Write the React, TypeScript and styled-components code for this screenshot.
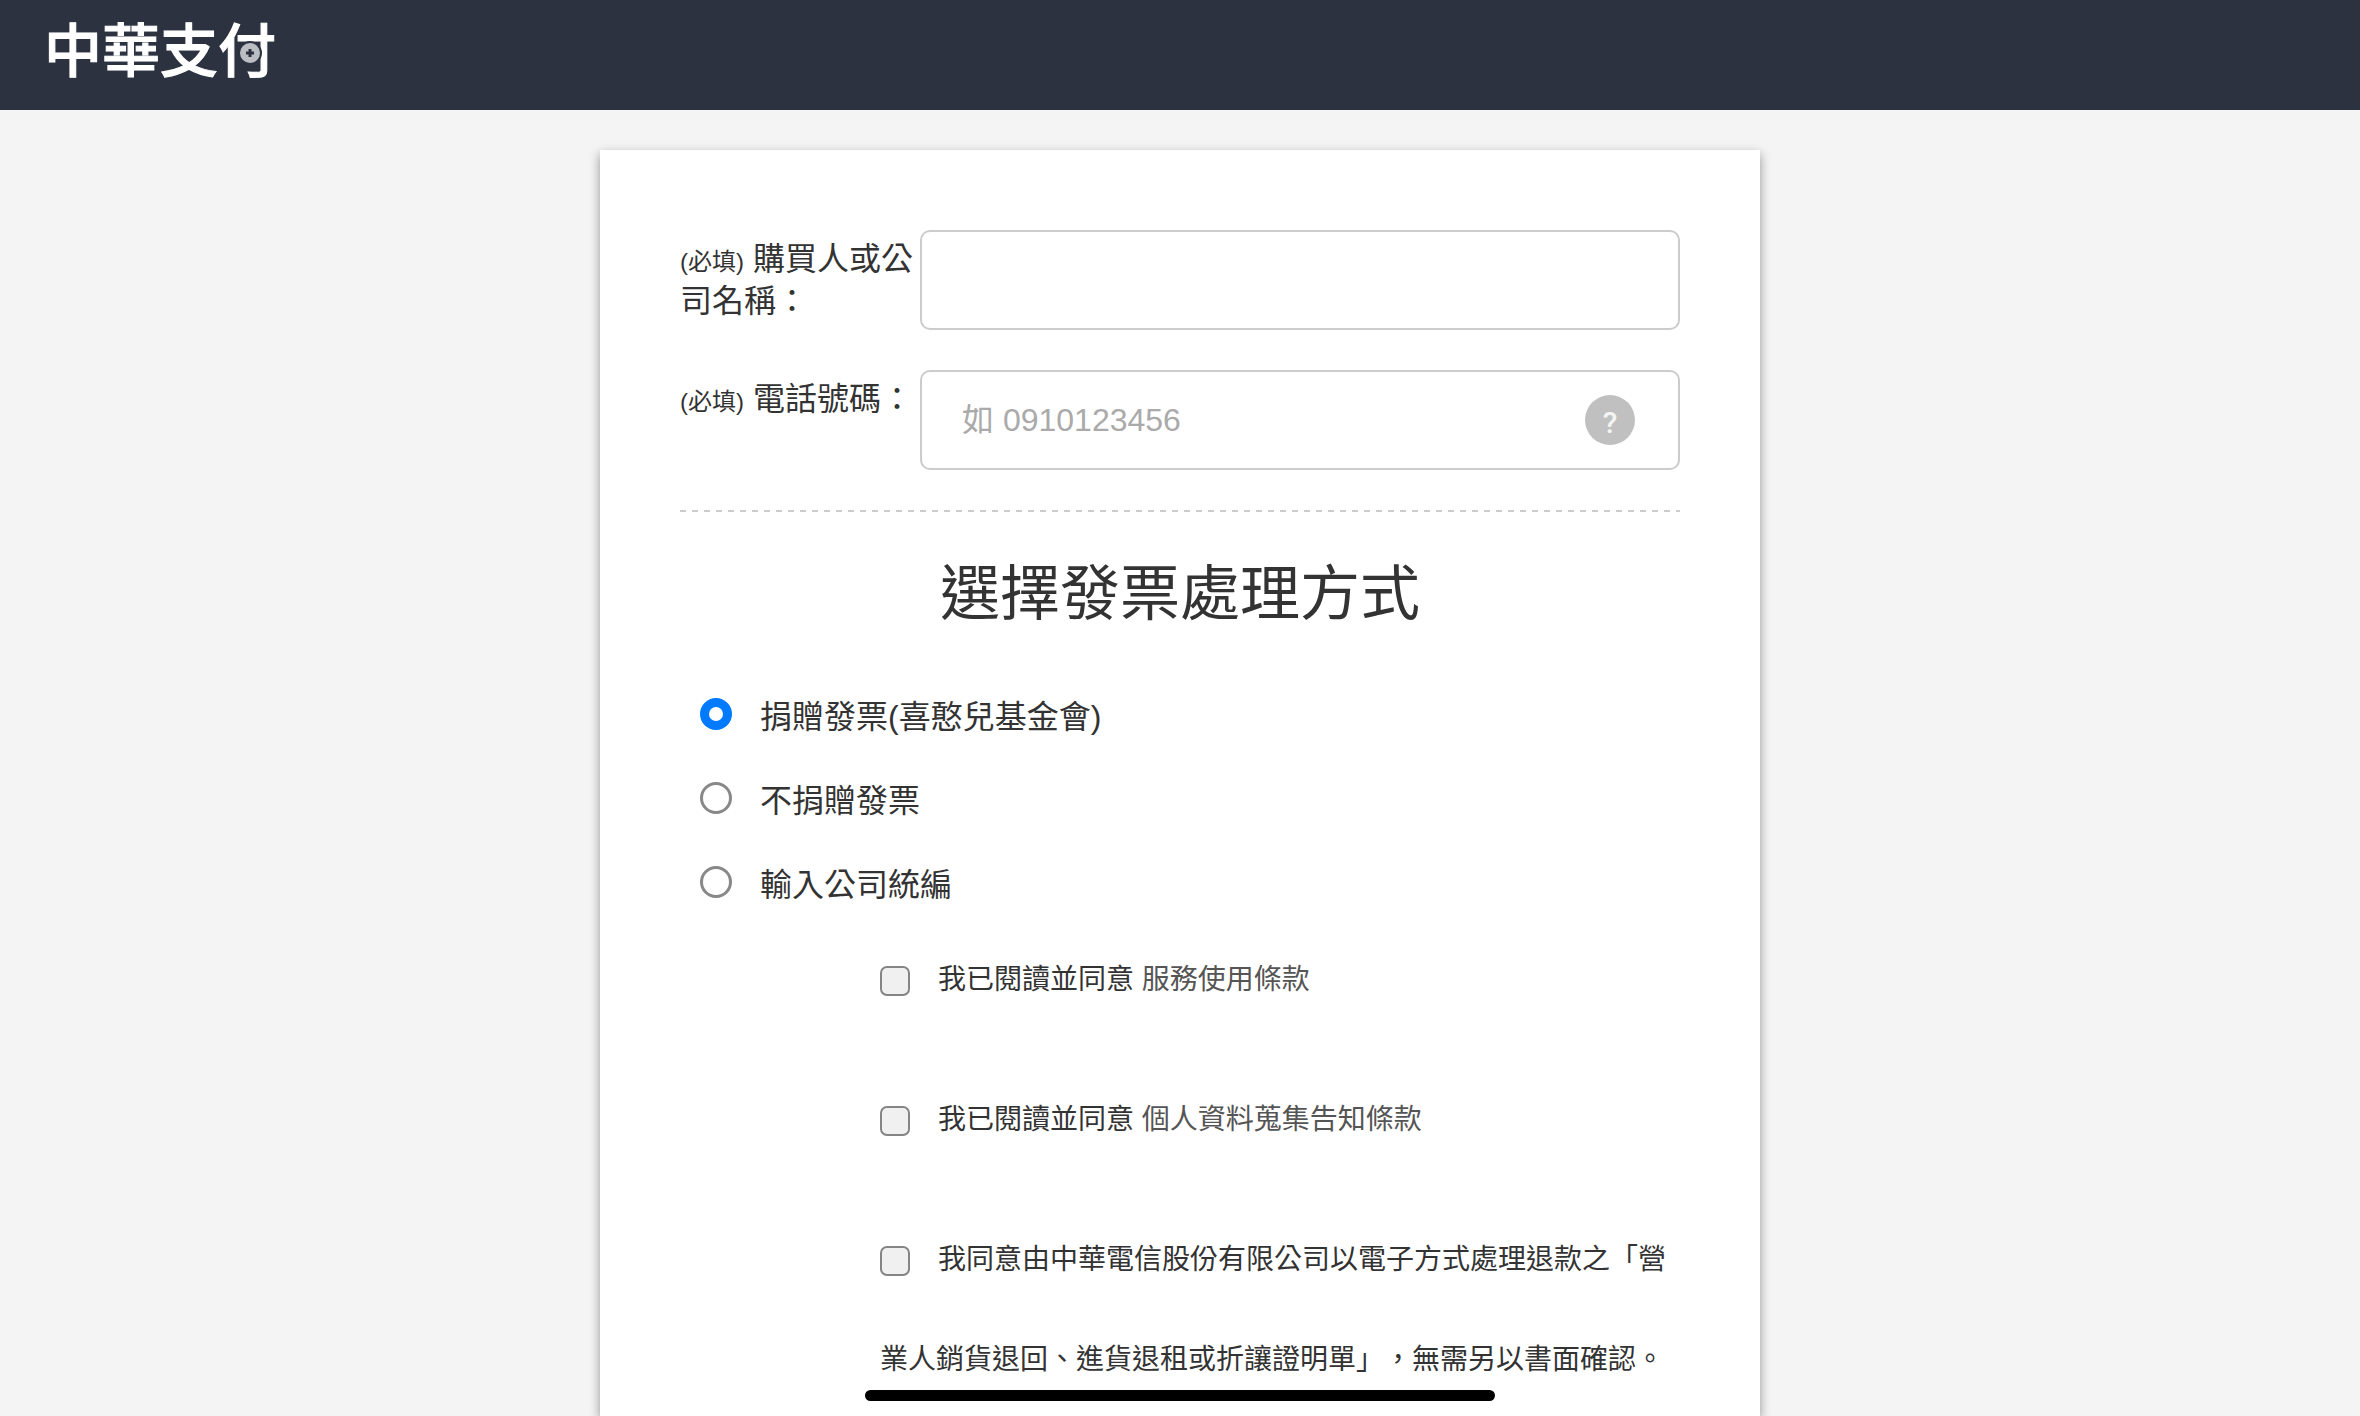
import React, { useState } from 'react';
import styled, { createGlobalStyle } from 'styled-components';

const GlobalStyle = createGlobalStyle`
  *, *::before, *::after { box-sizing: border-box; }
  body {
    margin: 0;
    background: #f4f4f4;
    color: #333;
    font-family: "Liberation Sans", "Noto Sans CJK TC", sans-serif;
    font-size: 32px;
    line-height: 42px;
    text-spacing-trim: space-all;
  }
`;

const Page = styled.div`
  min-height: 100vh;
  display: flex;
  flex-direction: column;
`;

const Header = styled.header`
  display: flex;
  align-items: center;
  height: 110px;
  padding: 0 44px 6px;
  background: #2c3240;
`;

const Brand = styled.a`
  position: relative;
  color: #fff;
  font-size: 58px;
  font-weight: 500;
  line-height: 64px;
  text-decoration: none;
  -webkit-text-stroke: 1px #fff;
`;

const Coin = styled.svg`
  position: absolute;
  right: 14px;
  top: 21px;
  width: 24px;
  height: 24px;
`;

const Card = styled.main`
  flex: 1;
  width: 100%;
  max-width: 1160px;
  margin: 40px auto 0;
  padding: 80px 80px 0;
  background: #fff;
  box-shadow: 0 4px 10px rgba(0, 0, 0, 0.4);
`;

const Fields = styled.div`
  display: flex;
  flex-direction: column;
  gap: 40px;
  padding-bottom: 40px;
`;

const Field = styled.div`
  display: grid;
  grid-template-columns: 240px 1fr;
`;

const FieldLabel = styled.label`
  padding-top: 8px;
`;

const Required = styled.span`
  font-size: 24px;
  line-height: 24px;
`;

const InputBox = styled.div`
  display: flex;
  align-items: center;
  height: 100px;
  padding: 0 43px 0 40px;
  border: 2px solid #ccc;
  border-radius: 10px;
  background: #fff;
`;

const TextInput = styled.input`
  flex: 1;
  min-width: 0;
  height: 100%;
  padding: 0;
  border: 0;
  outline: 0;
  background: transparent;
  color: #333;
  font: inherit;
  &::placeholder { color: #aaa; opacity: 1; }
`;

const HelpButton = styled.button`
  width: 50px;
  height: 50px;
  padding: 6px 0 0;
  border: 0;
  border-radius: 50%;
  background: #c0c0c0;
  color: #f4f4f4;
  font: 500 30px/44px Roboto, sans-serif;
`;

const Divider = styled.hr`
  height: 2px;
  margin: 0;
  border: 0;
  background: repeating-linear-gradient(90deg, #ccc 0 6px, transparent 6px 12px);
`;

const Title = styled.h1`
  margin: 41px 0 51px;
  font-size: 60px;
  font-weight: 400;
  line-height: 84px;
  text-align: center;
`;

const Options = styled.fieldset`
  display: flex;
  flex-direction: column;
  gap: 42px;
  margin: 0;
  padding: 8px 20px 24px;
  border: 0;
`;

const Option = styled.label`
  display: flex;
  gap: 28px;
`;

const Radio = styled.input`
  appearance: none;
  flex: none;
  width: 32px;
  height: 32px;
  margin: 2px 0 0;
  border: 3px solid #888;
  border-radius: 50%;
  background: #fff;
  &:checked { border: 9px solid #007aff; }
`;

const Agreements = styled.div`
  display: flex;
  flex-direction: column;
  gap: 40px;
  padding-left: 200px;
  font-size: 28px;
  line-height: 100px;
`;

const Checkbox = styled.input`
  appearance: none;
  width: 30px;
  height: 30px;
  margin: 0 28px 0 0;
  border: 2px solid #858585;
  border-radius: 7px;
  background: #f0f0f0;
  vertical-align: -7px;
  &:checked { background: #007aff; }
`;

const TermsLink = styled.a`
  color: #555;
  text-decoration: none;
`;

const HomeBar = styled.div`
  position: fixed;
  left: 50%;
  bottom: 15px;
  width: 630px;
  height: 11px;
  border-radius: 6px;
  background: #000;
  transform: translateX(-50%);
`;

const choices = ['捐贈發票(喜憨兒基金會)', '不捐贈發票', '輸入公司統編'];

export default function App() {
  const [choice, setChoice] = useState(0);
  return (
    <Page>
      <GlobalStyle />
      <Header>
        <Brand href="#">
          中華支付
          <Coin viewBox="0 0 24 24" aria-hidden="true">
            <circle cx="12" cy="12" r="11" fill="#babdc2" stroke="#2c3240" strokeWidth="2" />
            <path d="M12 8v8M8 12h8" stroke="#2c3240" strokeWidth="3" />
          </Coin>
        </Brand>
      </Header>
      <Card>
        <Fields>
          <Field>
            <FieldLabel htmlFor="buyer"><Required>(必填)</Required> 購買人或公司名稱：</FieldLabel>
            <InputBox><TextInput id="buyer" type="text" /></InputBox>
          </Field>
          <Field>
            <FieldLabel htmlFor="phone"><Required>(必填)</Required> 電話號碼：</FieldLabel>
            <InputBox>
              <TextInput id="phone" type="tel" placeholder="如 0910123456" />
              <HelpButton type="button">?</HelpButton>
            </InputBox>
          </Field>
        </Fields>
        <Divider />
        <Title id="invoice-title">選擇發票處理方式</Title>
        <Options aria-labelledby="invoice-title">
          {choices.map((text, i) => (
            <Option key={text}>
              <Radio type="radio" name="invoice" checked={choice === i} onChange={() => setChoice(i)} />
              {text}
            </Option>
          ))}
        </Options>
        <Agreements>
          <div>
            <Checkbox type="checkbox" id="terms" />
            <label htmlFor="terms">我已閱讀並同意</label> <TermsLink href="#">服務使用條款</TermsLink>
          </div>
          <div>
            <Checkbox type="checkbox" id="privacy" />
            <label htmlFor="privacy">我已閱讀並同意</label> <TermsLink href="#">個人資料蒐集告知條款</TermsLink>
          </div>
          <div>
            <Checkbox type="checkbox" id="refund" />
            <label htmlFor="refund">我同意由中華電信股份有限公司以電子方式處理退款之「營業人銷貨退回、進貨退租或折讓證明單」，無需另以書面確認。</label>
          </div>
        </Agreements>
      </Card>
      <HomeBar />
    </Page>
  );
}
